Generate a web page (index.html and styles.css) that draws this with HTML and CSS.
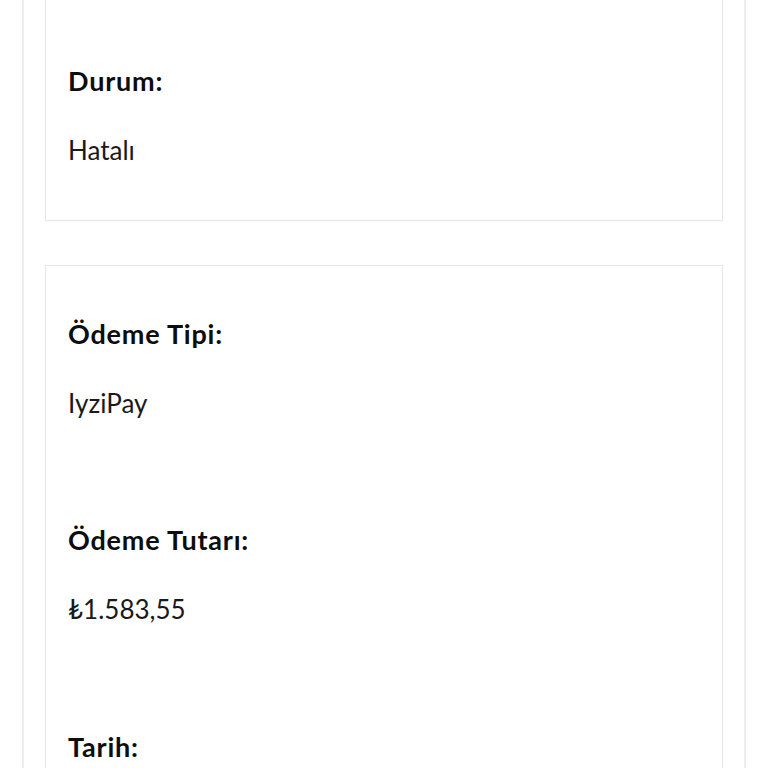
FILE: index.html
```html
<!DOCTYPE html>
<html lang="tr">
<head>
    <meta charset="UTF-8">
    <title>Sipariş Detayı</title>
    <link rel="stylesheet" href="styles.css">
</head>
<body>
<div class="order-page">
    <div class="order-card order-card--first">
        <div class="order-field">
            <div class="field-label">Durum:</div>
            <div class="field-value">Hatalı</div>
        </div>
    </div>

    <div class="order-card">
        <div class="order-field">
            <div class="field-label">Ödeme Tipi:</div>
            <div class="field-value">IyziPay</div>
        </div>
        <div class="order-field">
            <div class="field-label">Ödeme Tutarı:</div>
            <div class="field-value">₺1.583,55</div>
        </div>
        <div class="order-field">
            <div class="field-label">Tarih:</div>
        </div>
    </div>
</div>
</body>
</html>
```

FILE: styles.css
```css
body {
    margin: 0;
    background: #fff;
    font-family: Lato, "Noto Sans", sans-serif;
    color: #111;
    overflow: hidden;
}
/* sayfa biraz aşağı kaydırılmış */
.order-page {
    margin: -18px 22px 0;
    padding: 0 21px 40px;
    border-left: 2px solid #ededed;
    border-right: 2px solid #ededed;
}
.order-card {
    border: 1px solid #e6e6e6;
    padding: 53px 22px 54px;
    margin-bottom: 44px;
}
.order-card--first {
    padding-top: 83px;
}
.order-field + .order-field {
    margin-top: 106px;
}
.field-label {
    font-size: 27px;
    line-height: 30px;
    font-weight: 700;
    letter-spacing: 0.8px;
    color: #0d0d0d;
}
.field-value {
    font-size: 26px;
    line-height: 1.2;
    margin-top: 39px;
    color: #1a1a1a;
}
```
